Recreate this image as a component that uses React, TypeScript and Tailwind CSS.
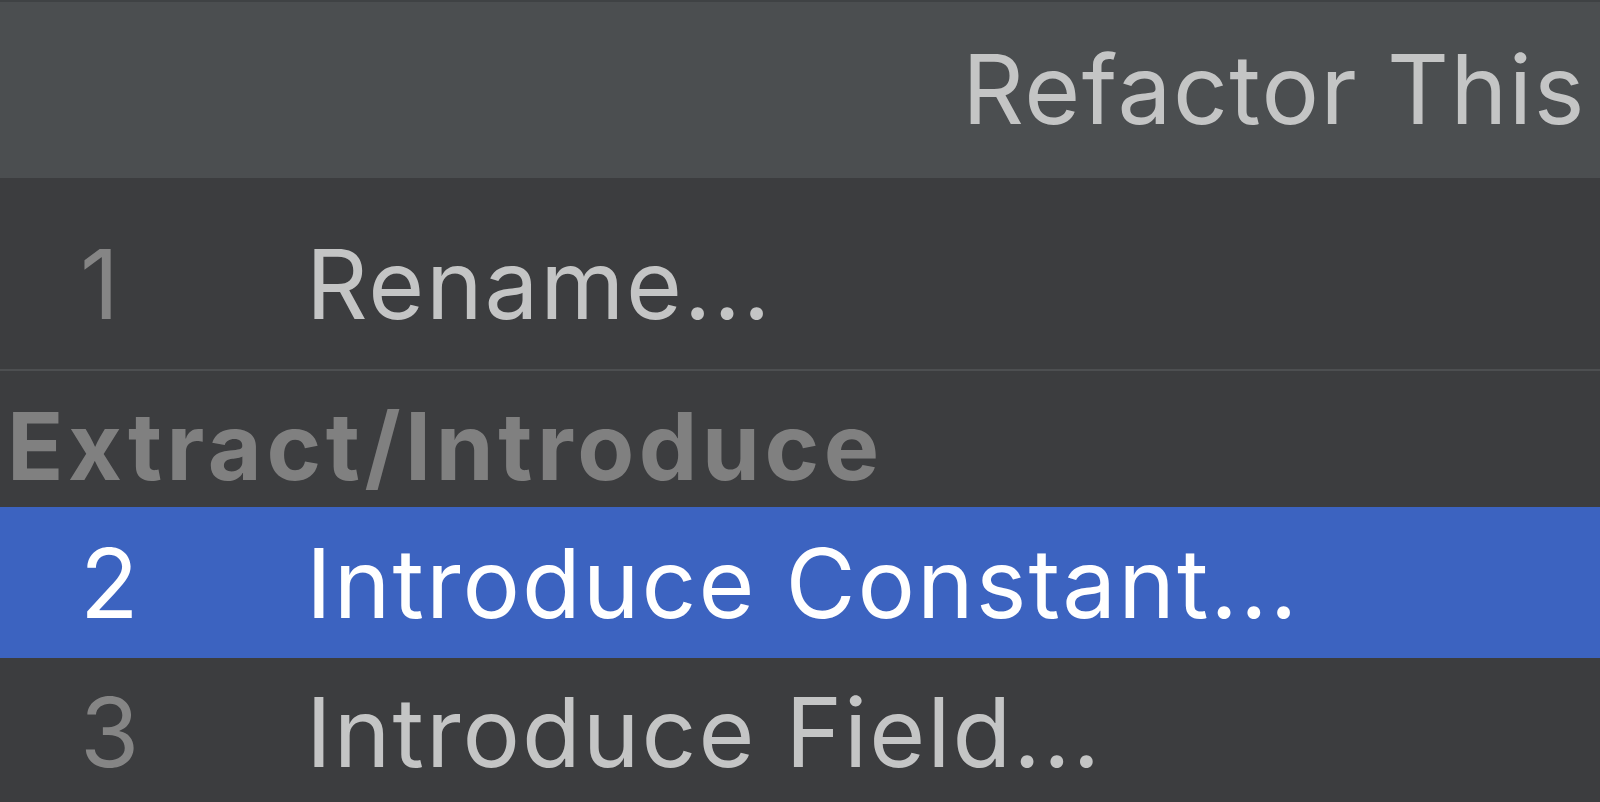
const items = [
  { key: '2', label: 'Introduce Constant...', selected: true },
  { key: '3', label: 'Introduce Field...', selected: false },
];

export default function App() {
  return (
    <div
      className="w-[1600px] h-[802px] overflow-hidden bg-[#3c3d3f] flex flex-col"
      style={{ fontFamily: 'Inter, "Liberation Sans", sans-serif' }}
    >
      {/* popup title */}
      <div className="h-[178px] shrink-0 bg-[#4b4e50] border-t-2 border-[#3f4244] flex items-center justify-end pr-[14px]">
        <span className="text-[96px] leading-none tracking-[1.6px] text-[#c4c5c5] pb-[2px]">Refactor This</span>
      </div>

      <div className="h-[191px] shrink-0 flex items-center pt-[20px]">
        <span className="w-[306px] pl-[80px] text-[96px] leading-none text-[#858585]">1</span>
        <span className="text-[96px] leading-none tracking-[1.8px] text-[#c4c5c5]">Rename...</span>
      </div>

      <div className="h-[2px] shrink-0 bg-[#4d4f51]" />

      <div className="h-[136px] shrink-0 flex items-center pt-[14px] pl-[7px]">
        <span className="text-[93px] leading-none font-bold tracking-[4.6px] text-[#808080]">Extract/Introduce</span>
      </div>

      {items.map((it) => (
        <div
          key={it.key}
          className={
            it.selected
              ? 'h-[151px] shrink-0 flex items-center bg-[#3c63c0]'
              : 'h-[151px] shrink-0 flex items-center pb-[4px]'
          }
        >
          <span
            className={
              it.selected
                ? 'w-[306px] pl-[80px] text-[96px] leading-none text-white'
                : 'w-[306px] pl-[80px] text-[96px] leading-none text-[#858585]'
            }
          >
            {it.key}
          </span>
          <span
            className={
              it.selected
                ? 'text-[96px] leading-none tracking-[2px] text-white'
                : 'text-[96px] leading-none tracking-[2px] text-[#c4c5c5]'
            }
          >
            {it.label}
          </span>
        </div>
      ))}
    </div>
  );
}
